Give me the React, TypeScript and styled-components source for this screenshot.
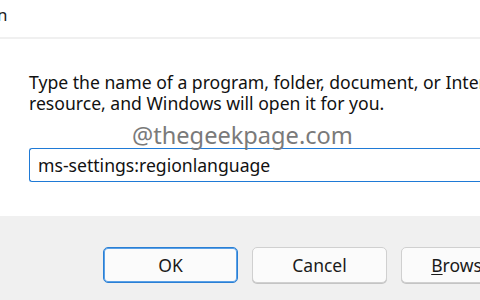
import { createGlobalStyle } from 'styled-components';
import styled from 'styled-components';

const GlobalStyle = createGlobalStyle`
    html, body {
        margin: 0;
        padding: 0;
        background: #ffffff;
    }
`;

const Window = styled.div`
    position: relative;
    width: 480px;
    height: 300px;
    overflow: hidden;
    background: #ffffff;
    font-family: 'Noto Sans', 'Open Sans', sans-serif;
    color: #1a1a1a;
    display: flex;
    flex-direction: column;
`;

const TitleBar = styled.div`
    height: 37px;
    border-bottom: 2px solid #f0f0f0;
    display: flex;
    align-items: flex-start;
    white-space: nowrap;
`;

const Title = styled.span`
    margin-left: -24px;
    margin-top: 3px;
    font-size: 17px;
    color: #202020;
`;

const Body = styled.div`
    position: relative;
    flex: 1;
    padding: 33px 0 0 29px;
`;

const Prompt = styled.p`
    margin: 0;
    width: 560px;
    font-size: 17.6px;
    line-height: 21px;
    color: #111111;
`;

const Watermark = styled.span`
    position: absolute;
    left: 132px;
    top: 80px;
    font-size: 23.6px;
    color: #7a7a7a;
`;

const Input = styled.div`
    margin-top: 34px;
    width: 480px;
    height: 32px;
    border: 1px solid #1f7ad6;
    border-right: none;
    border-radius: 3px 0 0 3px;
    display: flex;
    align-items: center;
    padding-left: 8px;
    font-size: 17.6px;
    color: #111111;
`;

const Footer = styled.div`
    height: 84px;
    background: #f0f0f0;
    display: flex;
    gap: 14px;
    padding: 31px 0 0 103px;
    box-sizing: border-box;
    white-space: nowrap;
`;

const Button = styled.div<{ $primary?: boolean }>`
    flex: none;
    width: 133px;
    height: 34px;
    border: 1px solid ${(p) => (p.$primary ? '#2a7fd4' : '#d0d0d0')};
    border-radius: 5px;
    background: #fbfbfb;
    display: flex;
    align-items: center;
    justify-content: center;
    font-size: 17.5px;
    color: #1a1a1a;
    box-shadow: ${(p) => (p.$primary ? 'inset 0 0 0 1px #5aa0e6' : '0 1px 0 #c4c4c4')};
`;

const Key = styled.span`
    text-decoration: underline;
    text-underline-offset: 2px;
`;

export default function App() {
    return (
        <Window>
            <GlobalStyle />
            <TitleBar>
                <Title>Run</Title>
            </TitleBar>
            <Body>
                <Prompt>
                    Type the name of a program, folder, document, or Internet
                    <br />
                    resource, and Windows will open it for you.
                </Prompt>
                <Watermark>@thegeekpage.com</Watermark>
                <Input>ms-settings:regionlanguage</Input>
            </Body>
            <Footer>
                <Button $primary>OK</Button>
                <Button>Cancel</Button>
                <Button>
                    <Key>B</Key>rowse...
                </Button>
            </Footer>
        </Window>
    );
}
